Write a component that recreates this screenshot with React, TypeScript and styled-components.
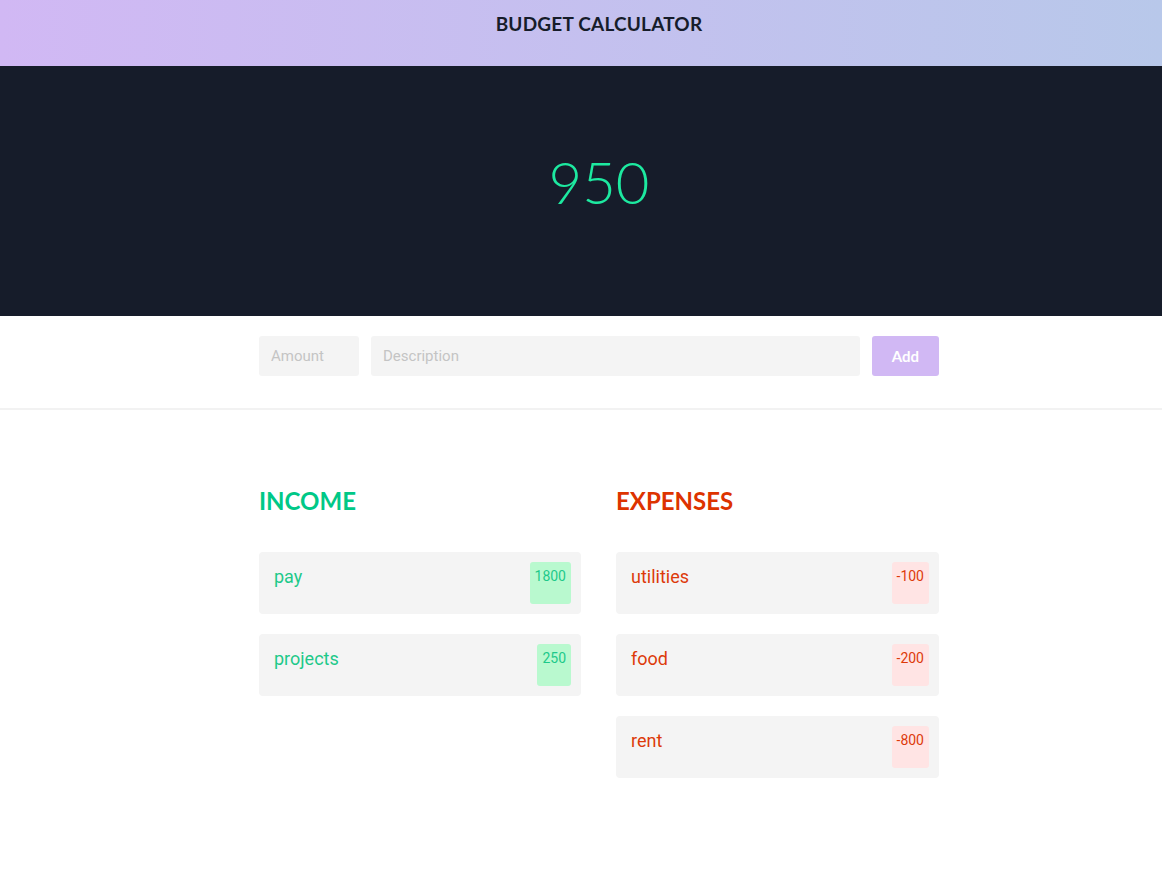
import React from "react";
import styled, { createGlobalStyle } from "styled-components";

const Global = createGlobalStyle`
  html, body { margin: 0; padding: 0; background: #ffffff; }
  body { font-family: "Lato", "Roboto", sans-serif; }
  * { box-sizing: border-box; }
`;

const Header = styled.header`
  height: 66px;
  background: linear-gradient(90deg, #d1b8f4 0%, #b8c8ea 100%);
  display: flex;
  justify-content: center;
  padding: 12px 0 0 36px;
`;

const Title = styled.h1`
  margin: 0;
  font-family: "Lato", sans-serif;
  font-weight: 700;
  font-size: 19px;
  line-height: 24px;
  letter-spacing: 0.2px;
  color: #161c2a;
`;

const Hero = styled.section`
  height: 250px;
  background: #161c2a;
  display: flex;
  justify-content: center;
  padding: 81px 0 0 36px;
`;

const Total = styled.div`
  font-family: "Lato", sans-serif;
  font-weight: 300;
  font-size: 58px;
  line-height: 70px;
  color: #1de9a0;
`;

const FormBar = styled.section`
  border-bottom: 2px solid #f2f2f2;
  display: flex;
  justify-content: center;
  padding: 20px 0 32px 36px;
`;

const Form = styled.form`
  width: 680px;
  display: flex;
  gap: 12px;
`;

const Field = styled.input<{ $w?: number }>`
  height: 40px;
  border: none;
  border-radius: 3px;
  background: #f4f4f4;
  padding: 0 12px;
  font-family: "Roboto", sans-serif;
  font-size: 15px;
  color: #333;
  outline: none;
  ${(p) => (p.$w ? `width: ${p.$w}px;` : "flex: 1; min-width: 0;")}
  &::placeholder { color: #c4c4c4; }
`;

const AddButton = styled.button`
  width: 67px;
  height: 40px;
  border: none;
  border-radius: 3px;
  background: #d1b8f4;
  color: #ffffff;
  font-family: "Lato", sans-serif;
  font-weight: 700;
  font-size: 15px;
`;

const Lists = styled.main`
  display: flex;
  justify-content: center;
  padding: 78px 0 0 36px;
`;

const Columns = styled.div`
  width: 680px;
  display: grid;
  grid-template-columns: 322px 323px;
  column-gap: 35px;
`;

const Column = styled.div`
  display: flex;
  flex-direction: column;
  gap: 20px;
`;

const Heading = styled.h2<{ $c: string }>`
  margin: 0 0 18px;
  font-family: "Lato", sans-serif;
  font-weight: 700;
  font-size: 24px;
  line-height: 26px;
  color: ${(p) => p.$c};
`;

const Card = styled.div`
  height: 62px;
  background: #f4f4f4;
  border-radius: 4px;
  display: flex;
  justify-content: space-between;
  align-items: flex-start;
  padding: 10px 10px 0 15px;
`;

const Label = styled.span<{ $c: string }>`
  font-family: "Roboto", sans-serif;
  font-size: 18px;
  line-height: 22px;
  margin-top: 4px;
  color: ${(p) => p.$c};
`;

const Badge = styled.span<{ $bg: string; $c: string }>`
  height: 42px;
  padding: 5px 5px 0;
  border-radius: 3px;
  background: ${(p) => p.$bg};
  color: ${(p) => p.$c};
  font-family: "Roboto", sans-serif;
  font-size: 14px;
  line-height: 18px;
`;

const income = [
  { d: "pay", a: "1800" },
  { d: "projects", a: "250" },
];
const expenses = [
  { d: "utilities", a: "-100" },
  { d: "food", a: "-200" },
  { d: "rent", a: "-800" },
];

const GREEN = "#1ec98a";
const RED = "#dd3a0a";

export default function App() {
  return (
    <>
      <Global />
      <Header>
        <Title>BUDGET CALCULATOR</Title>
      </Header>
      <Hero>
        <Total>950</Total>
      </Hero>
      <FormBar>
        <Form onSubmit={(e) => e.preventDefault()}>
          <Field $w={100} placeholder="Amount" />
          <Field placeholder="Description" />
          <AddButton type="submit">Add</AddButton>
        </Form>
      </FormBar>
      <Lists>
        <Columns>
          <Column>
            <Heading $c="#00c887">INCOME</Heading>
            {income.map((i) => (
              <Card key={i.d}>
                <Label $c={GREEN}>{i.d}</Label>
                <Badge $bg="#b9f9cf" $c={GREEN}>{i.a}</Badge>
              </Card>
            ))}
          </Column>
          <Column>
            <Heading $c="#dd3300">EXPENSES</Heading>
            {expenses.map((i) => (
              <Card key={i.d}>
                <Label $c={RED}>{i.d}</Label>
                <Badge $bg="#ffe4e4" $c={RED}>{i.a}</Badge>
              </Card>
            ))}
          </Column>
        </Columns>
      </Lists>
    </>
  );
}
